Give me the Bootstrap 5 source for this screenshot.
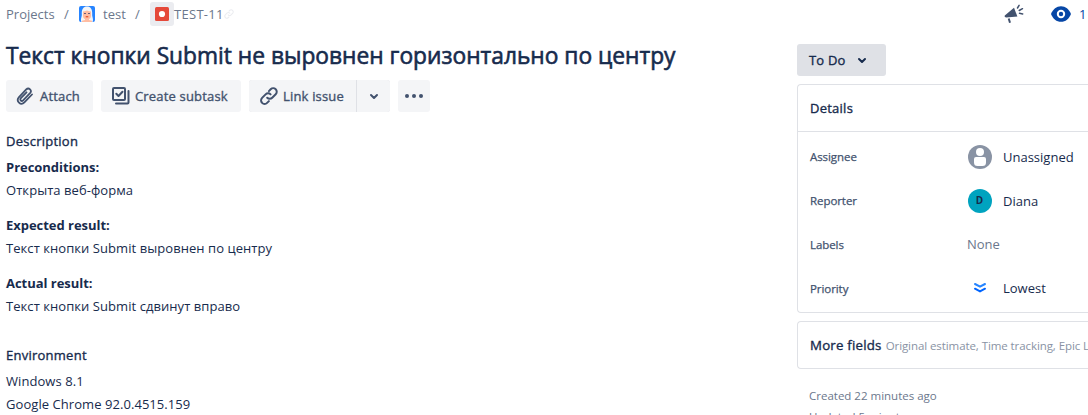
<!DOCTYPE html>
<html lang="en">
<head>
<meta charset="utf-8">
<meta name="viewport" content="width=device-width, initial-scale=1">
<title>TEST-11</title>
<link rel="stylesheet" href="https://cdn.jsdelivr.net/npm/bootstrap@5.3.0/dist/css/bootstrap.min.css">
<style>
body{font-family:"Open Sans","Noto Sans",sans-serif;font-size:13px;line-height:23px;color:#172b4d;height:415px;background:#fff}
svg{display:block;flex:none}
.topbar{height:28px;color:#6b778c}
.crumbs{padding-left:6px;white-space:pre}
.issue-type{width:24px;height:24px;background:#ebecf0;border-radius:3px}
.watch{width:84px}
.main-col{width:797px;padding:14px 0 0 6px}
.side-col{width:291px;padding-top:16px}
.medium-text,.tool,.sect,.panel-head{-webkit-text-stroke:.35px currentColor}
.issue-title{font-size:22.75px;line-height:28px;font-weight:400;margin:0 0 10px;white-space:nowrap;-webkit-text-stroke:.6px currentColor}
.tool{height:32px;padding:0;border:0;border-radius:3px;background:#f4f5f7;color:#42526e;font-size:13px;line-height:32px;display:flex;align-items:center;white-space:nowrap;letter-spacing:.18px}
.tool:hover{background:#ebecf0}
.sect{font-size:13px;font-weight:400;line-height:20px;margin:0;letter-spacing:.25px}
.doc p{margin:0 0 12px;white-space:nowrap;letter-spacing:.06px}
.doc b{font-weight:700;letter-spacing:-.03px}
.status{height:32px;width:89px;background:#dfe1e6;color:#172b4d;padding:0 0 0 12px}
.panel{border:1px solid #dfe1e6;border-right:0;border-radius:4px 0 0 4px;background:#fff}
.panel-head{height:47px;padding-left:12px;border-bottom:1px solid #dfe1e6;letter-spacing:.25px}
.fields{height:180px;padding-top:3px}
.field{height:43.75px;padding-left:12px}
.field-name{width:157px;font-size:11.5px;color:#42526e;-webkit-text-stroke:.25px currentColor;letter-spacing:-.07px}
.field-value{padding-top:1px}
.avatar-slot{width:24px;margin:0 11.500px 0 .5px}
.initial{width:24px;height:24px;border-radius:50%;background:#00a3bf;font-size:10px;font-weight:700}
.more{height:48px;margin-top:8px;padding-left:12px;white-space:nowrap;overflow:hidden}
.dates{padding:17px 0 0 12px;font-size:11.5px;line-height:20px;color:#6b778c}
</style>
</head>
<body class="overflow-hidden">
<header class="topbar d-flex align-items-center">
  <nav class="crumbs d-flex align-items-center" aria-label="breadcrumb">
    <span style="width:58px">Projects</span><span style="width:15px">/</span>
    <svg width="16" height="16" viewBox="0 0 16 16"><rect width="16" height="16" rx="2" fill="#2684ff"/><path d="M2.500 16C1 13 3.200 11 2.800 8C2.500 3 4.500 .5 8 .5s5.500 2.500 5.200 7.500c-.4 3 1.800 5 .3 8z" fill="#f4f5f7"/><path d="M4 5.500c2.500 0 3-1 4-1s1.500 1 4 1V10c0 2-1.400 2.800-2 3V14l3 .7V16H3v-1.300l3-.7v-1c-.7-.2-2-1-2-3z" fill="#ffbda3"/><path d="M5 7h2v1H5zM9 7h2v1H9z" fill="#6b5b78"/><path d="M6.700 10.300h2.600v1H6.700z" fill="#de350b"/></svg>
    <span style="width:32px;margin-left:8px">test</span><span style="width:15px">/</span>
    <span class="issue-type d-flex align-items-center justify-content-center"><svg width="14" height="14" viewBox="0 0 14 14"><rect width="14" height="14" rx="1.500" fill="#e5493a"/><circle cx="7" cy="7" r="3.100" fill="#fff"/></svg></span>
    <span style="letter-spacing:.3px">TEST-11</span>
    <svg width="10" height="10" viewBox="0 0 24 24" fill="none" stroke="#ebecf0" stroke-width="2.500" stroke-linecap="round"><path d="M10 14a5 5 0 0 0 7 0l4-4a5 5 0 0 0-7-7l-2 2M14 10a5 5 0 0 0-7 0l-4 4a5 5 0 0 0 7 7l2-2"/></svg>
  </nav>
  <div class="watch d-flex align-items-center ms-auto">
    <svg width="20" height="20" viewBox="0 0 20 20"><path d="M.8 11.600 10 3.800l3.400 8.800-11.200.8C1.200 13.400 0 12.500.8 11.600z" fill="#42526e"/><path d="M4.700 14.500 6 18.800" stroke="#42526e" stroke-width="2"/><path d="m13.500 4 1.600-2.700M15.200 6.500l3.300-1.800M15.500 9.300l3.200.6" stroke="#42526e" stroke-width="1.500" stroke-linecap="round"/></svg>
    <svg style="margin-left:27px" width="20" height="16" viewBox="0 0 20 16"><path d="M0 8C2 3 5.500.2 10 .2S18 3 20 8c-2 5-5.500 7.800-10 7.800S2 13 0 8z" fill="#0747a6"/><circle cx="10" cy="8" r="3.200" fill="none" stroke="#fff" stroke-width="2"/></svg>
    <span style="margin-left:8px;color:#0747a6">1</span>
  </div>
</header>
<div class="d-flex">
  <main class="main-col flex-shrink-0">
    <h1 class="issue-title">Текст кнопки Submit не выровнен горизонтально по центру</h1>
    <div class="d-flex gap-2">
      <button class="tool" style="width:87px"><svg width="20" height="20" viewBox="0 0 20 20" fill="none" stroke="#42526e" stroke-width="1.800" stroke-linecap="round" style="margin:0 5px 0 9px"><path d="m11.500 6.300-5.600 5.900c-1.500 1.700.6 3.800 2.200 2.200l6.900-7.200c2.500-2.800-1.200-6.200-3.800-3.700L4 11.200c-3.500 3.900 1.700 8.900 5.400 5.200l7.600-7.900"/></svg>Attach</button>
      <button class="tool" style="width:140px"><svg width="20" height="20" viewBox="0 0 20 20" fill="none" stroke="#42526e" stroke-width="2" stroke-linejoin="round" style="margin:0 4px 0 10px"><rect x="2" y="2" width="12" height="12" rx="1"/><path d="M5.300 7.800 7.500 10l4-4.300M17.500 5v11.500a1 1 0 0 1-1 1H5" stroke-linecap="round"/></svg>Create subtask</button>
      <div class="d-flex" style="gap:1px;background:#dfe1e6;border-radius:3px">
        <button class="tool rounded-end-0" style="width:107px"><svg width="20" height="20" viewBox="0 0 20 20" fill="none" stroke="#42526e" stroke-width="2" stroke-linecap="round" style="margin:0 4px 0 10px"><path d="M8.200 11.800a3.500 3.500 0 0 0 5 0l3.500-3.500a3.500 3.500 0 0 0-5-5l-1.800 1.800M11.600 8.400a3.500 3.500 0 0 0-5 0L3.100 11.900a3.500 3.500 0 0 0 5 5l1.800-1.800"/></svg>Link issue</button>
        <button class="tool justify-content-center rounded-start-0" style="width:33px" aria-label="More link options"><svg width="10" height="8" viewBox="0 0 10 8" fill="none" stroke="#42526e" stroke-width="2" stroke-linecap="round" stroke-linejoin="round"><path d="m2 3 3 3 3-3"/></svg></button>
      </div>
      <button class="tool justify-content-center" style="width:32px" aria-label="More actions"><svg width="20" height="6" viewBox="0 0 20 6" fill="#42526e"><circle cx="3" cy="3" r="2"/><circle cx="10" cy="3" r="2"/><circle cx="17" cy="3" r="2"/></svg></button>
    </div>
    <section class="doc" style="padding-top:19px">
      <h2 class="sect" style="margin-bottom:5px">Description</h2>
      <p><b>Preconditions:</b><br>Открыта веб-форма</p>
      <p><b>Expected result:</b><br>Текст кнопки Submit выровнен по центру</p>
      <p><b>Actual result:</b><br>Текст кнопки Submit сдвинут вправо</p>
      <h2 class="sect" style="margin:27px 0 5px">Environment</h2>
      <p>Windows 8.1<br>Google Chrome 92.0.4515.159</p>
    </section>
  </main>
  <aside class="side-col flex-shrink-0">
    <button class="tool status">To Do<svg width="10" height="8" viewBox="0 0 10 8" fill="none" stroke="#172b4d" stroke-width="2" stroke-linecap="round" stroke-linejoin="round" style="margin-left:11px"><path d="m2 3 3 3 3-3"/></svg></button>
    <div class="panel mt-2">
      <div class="panel-head d-flex align-items-center">Details</div>
      <div class="fields">
        <div class="field d-flex align-items-center"><span class="field-name">Assignee</span><span class="avatar-slot"><svg width="24" height="24" viewBox="0 0 24 24"><circle cx="12" cy="12" r="12" fill="#8993a4"/><circle cx="12" cy="7" r="4" fill="#fff"/><path d="M6 14a2 2 0 0 1 2-2h8a2 2 0 0 1 2 2v3.500a3.500 3.500 0 0 1-3.500 3.500h-5A3.500 3.500 0 0 1 6 17.500z" fill="#fff"/></svg></span><span class="field-value">Unassigned</span></div>
        <div class="field d-flex align-items-center"><span class="field-name">Reporter</span><span class="avatar-slot"><span class="initial d-flex align-items-center justify-content-center">D</span></span><span class="field-value">Diana</span></div>
        <div class="field d-flex align-items-center"><span class="field-name">Labels</span><span style="color:#6b778c">None</span></div>
        <div class="field d-flex align-items-center"><span class="field-name">Priority</span><span class="avatar-slot d-flex justify-content-center"><svg width="14" height="12" viewBox="0 0 14 12" fill="none" stroke-width="2" stroke-linecap="round" stroke-linejoin="round"><path d="m2 2 5 2.700L12 2" stroke="#2684ff"/><path d="m2 6.700 5 2.700 5-2.700" stroke="#0065ff"/></svg></span><span>Lowest</span></div>
      </div>
    </div>
    <div class="panel more d-flex align-items-center"><span class="medium-text" style="font-size:13.3px;letter-spacing:.2px">More fields</span><span style="font-size:11.5px;color:#8993a4;margin-left:4px;letter-spacing:-.08px">Original estimate, Time tracking, Epic Link</span></div>
    <div class="dates"><div>Created 22 minutes ago</div><div style="padding-top:1px">Updated 5 minutes ago</div></div>
  </aside>
</div>
<script src="https://cdn.jsdelivr.net/npm/bootstrap@5.3.0/dist/js/bootstrap.bundle.min.js"></script>
</body>
</html>
